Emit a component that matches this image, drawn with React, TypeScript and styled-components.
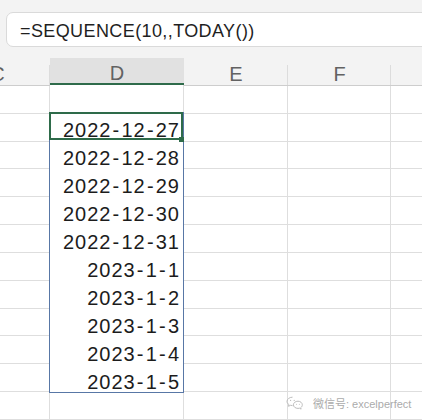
import React from 'react';
import styled, { createGlobalStyle } from 'styled-components';

const GlobalStyle = createGlobalStyle`
  body {
    margin: 0;
    background: #f3f3f3;
  }
`

const Page = styled.div`
  width: 422px;
  height: 420px;
  overflow: hidden;
  background: #f3f3f3;
  font-family: "Liberation Sans", Arial, sans-serif;
`

const FormulaRow = styled.div`
  padding: 12px 0 11px 6px;
`

const FormulaBar = styled.div`
  height: 35px;
  box-sizing: border-box;
  margin-right: -30px;
  border: 1px solid #dadada;
  border-radius: 7px;
  background: #fff;
  display: flex;
  align-items: center;
  padding: 2px 0 0 13px;
  font-size: 18px;
  line-height: 18px;
  letter-spacing: 0.4px;
  color: #1f1f1f;
`

const Sheet = styled.div`
  position: relative;
  display: flex;
  height: 362px;
  background: #fff;
`

const Column = styled.div<{ $w: number; $shift?: number }>`
  flex: 0 0 ${p => p.$w}px;
  width: ${p => p.$w}px;
  margin-left: ${p => p.$shift || 0}px;
  display: flex;
  flex-direction: column;
`

const HeaderCell = styled.div<{ $active?: boolean }>`
  position: relative;
  height: 28px;
  box-sizing: border-box;
  display: flex;
  align-items: flex-end;
  justify-content: center;
  padding-bottom: ${p => (p.$active ? 0 : 1)}px;
  background: ${p => (p.$active ? '#e1e1e1' : '#f3f3f3')};
  border-bottom: ${p => (p.$active ? '2px solid #2e6b4a' : '1px solid #cdcdcd')};
  color: #626262;
  font-size: 20px;
  line-height: 20px;

  &::after {
    content: '';
    position: absolute;
    top: 7px;
    right: 0;
    bottom: 0;
    width: 1px;
    background: ${p => (p.$active ? 'transparent' : '#dcdcdc')};
  }
`

const Cell = styled.div<{ $plain?: boolean }>`
  position: relative;
  height: 28px;
  box-sizing: border-box;
  display: flex;
  align-items: flex-end;
  justify-content: flex-end;
  padding-right: 3px;
  border-right: 1px solid #dedede;
  border-bottom: 1px solid ${p => (p.$plain ? 'transparent' : '#dedede')};
  color: #1c1c1c;
  font-size: 20px;
  line-height: 20px;
  letter-spacing: 1px;
`

const ActiveCell = styled(Cell)`
  &::after {
    content: '';
    position: absolute;
    top: -1px;
    left: -1px;
    right: 0;
    bottom: 0;
    border: 2px solid #2e6b4a;
    pointer-events: none;
    z-index: 2;
  }
`

const FillHandle = styled.span`
  position: absolute;
  right: -1px;
  bottom: -2px;
  width: 5px;
  height: 5px;
  background: #2e6b4a;
  z-index: 3;
`

const RangeBox = styled.div`
  position: relative;
  display: flex;
  flex-direction: column;

  &::after {
    content: '';
    position: absolute;
    top: -1px;
    left: -1px;
    right: 0;
    bottom: 0;
    border: 1px solid #5877a6;
    pointer-events: none;
  }
`

const Dash = styled.span`
  margin: 0 1.2px;
`

const Watermark = styled.div`
  position: absolute;
  left: 286px;
  top: 337px;
  display: flex;
  align-items: center;
  gap: 10px;
  color: #ababab;
  font-size: 11px;
  font-family: "Liberation Sans", "Noto Sans CJK SC", sans-serif;
`

const dates = [
  '2022-12-27',
  '2022-12-28',
  '2022-12-29',
  '2022-12-30',
  '2022-12-31',
  '2023-1-1',
  '2023-1-2',
  '2023-1-3',
  '2023-1-4',
  '2023-1-5',
]

const ROWS = 12;

const DateText = ({ value }: { value: string }) => {
  const parts = value.split('-');
  return (
    <span>
      {parts.map((p, i) => (
        <React.Fragment key={i}>
          {i > 0 && <Dash>-</Dash>}
          {p}
        </React.Fragment>
      ))}
    </span>
  );
}

const EmptyColumn = ({ name, width, shift }: { name: string; width: number; shift?: number }) => (
  <Column $w={width} $shift={shift}>
    <HeaderCell>{name}</HeaderCell>
    {Array.from({ length: ROWS }).map((_, i) => (
      <Cell key={i} />
    ))}
  </Column>
)

const WeChatIcon = () => (
  <svg width="17" height="14" viewBox="0 0 17 14" fill="none" stroke="#bdbdbd" strokeWidth="1">
    <path d="M6.5 1.2C3.4 1.2 1 3.1 1 5.4c0 1.3.7 2.4 1.9 3.2L2.5 10.3l2-1c.6.2 1.3.3 2 .3" />
    <path d="M12 5.2c-2.5 0-4.6 1.6-4.6 3.6s2.1 3.6 4.6 3.6c.5 0 1-.1 1.5-.2l1.6.9-.4-1.4c1-.7 1.6-1.7 1.6-2.9 0-2-2-3.6-4.300-3.6z" />
    <circle cx="4.6" cy="4.4" r=".6" fill="#bdbdbd" stroke="none" />
    <circle cx="8.2" cy="4.4" r=".6" fill="#bdbdbd" stroke="none" />
    <circle cx="10.5" cy="8.2" r=".5" fill="#bdbdbd" stroke="none" />
    <circle cx="13.4" cy="8.2" r=".5" fill="#bdbdbd" stroke="none" />
  </svg>
)

const App: React.FC = () => {
  return (
    <Page>
      <GlobalStyle />
      <FormulaRow>
        <FormulaBar>=SEQUENCE(10,,TODAY())</FormulaBar>
      </FormulaRow>
      <Sheet>
        <EmptyColumn name="C" width={105} shift={-55} />
        <Column $w={134}>
          <HeaderCell $active>D</HeaderCell>
          <Cell />
          <RangeBox>
            {dates.map((d, i) =>
              i === 0 ? (
                <ActiveCell key={d} $plain>
                  <DateText value={d} />
                  <FillHandle />
                </ActiveCell>
              ) : (
                <Cell key={d} $plain>
                  <DateText value={d} />
                </Cell>
              )
            )}
          </RangeBox>
          <Cell />
        </Column>
        <EmptyColumn name="E" width={104} />
        <EmptyColumn name="F" width={103} />
        <EmptyColumn name="" width={100} />
        <Watermark>
          <WeChatIcon />
          <span>微信号: excelperfect</span>
        </Watermark>
      </Sheet>
    </Page>
  );
}

export default App;
